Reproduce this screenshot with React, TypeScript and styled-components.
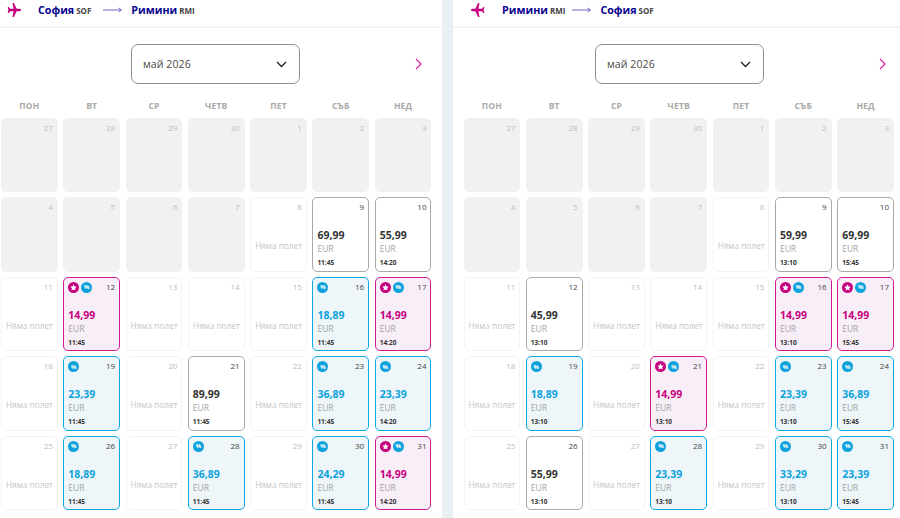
import styled, { createGlobalStyle } from "styled-components";

const GlobalStyle = createGlobalStyle`
  html, body {
    margin: 0;
    padding: 0;
    height: 518px;
    overflow: hidden;
    background: #e8f0f4;
    font-family: "Open Sans", "Noto Sans", sans-serif;
  }
`;

const Page = styled.div`
  display: flex;
  gap: 11px;
  width: 900px;
  height: 518px;
`;

const Panel = styled.section<{ $width: number }>`
  width: ${(p) => p.$width}px;
  height: 518px;
  background: #fff;
  box-sizing: border-box;
  flex: none;
`;

const RouteBar = styled.header<{ $pad: number }>`
  display: flex;
  align-items: center;
  height: 28px;
  box-sizing: border-box;
  padding: 0 0 7px ${(p) => p.$pad}px;
  border-bottom: 2px solid #f5f5f5;
  margin-bottom: 16px;
`;

const PlaneIcon = styled.svg<{ $flip: boolean }>`
  width: 14px;
  height: 14px;
  fill: #c6007e;
  margin-right: 17px;
  transform: ${(p) => (p.$flip ? "scaleX(-1)" : "none")};
`;

const Place = styled.span`
  display: flex;
  align-items: baseline;
  gap: 2px;
`;

const City = styled.span`
  font-size: 10.7px;
  font-weight: 700;
  color: #06038d;
`;

const Code = styled.span`
  font-size: 8px;
  font-weight: 700;
  color: #444;
`;

const ArrowIcon = styled.svg<{ $before: number }>`
  width: 19px;
  height: 6px;
  margin: 0 9px 0 ${(p) => p.$before}px;
  stroke: #6a66c9;
  fill: none;
`;

const MonthRow = styled.div<{ $left: number }>`
  display: flex;
  align-items: center;
  height: 40px;
  padding-left: ${(p) => p.$left}px;
  margin-bottom: 15px;
`;

const MonthSelect = styled.div`
  width: 169px;
  height: 40px;
  box-sizing: border-box;
  display: flex;
  align-items: center;
  justify-content: space-between;
  padding: 0 12px 0 11px;
  border: 1px solid #8f8f8f;
  border-radius: 7px;
  font-size: 10.5px;
  color: #4a4a4a;
  letter-spacing: 0.1px;
`;

const ChevronDown = styled.svg`
  width: 11px;
  height: 7px;
  stroke: #222;
  stroke-width: 1.3;
  fill: none;
`;

const ChevronRight = styled.svg<{ $gap: number }>`
  width: 7px;
  height: 12px;
  stroke: #d6249f;
  stroke-width: 1.2;
  fill: none;
  margin-left: ${(p) => p.$gap}px;
`;

const Grid = styled.div<{ $left: number; $width: number }>`
  display: grid;
  grid-template-columns: repeat(7, minmax(0, 1fr));
  column-gap: 5.5px;
  width: ${(p) => p.$width}px;
  margin-left: ${(p) => p.$left}px;
`;

const WeekDay = styled.div`
  height: 14px;
  margin-bottom: 5px;
  text-align: center;
  font-size: 8.5px;
  font-weight: 700;
  line-height: 14px;
  letter-spacing: 0.2px;
  color: #a9a9a9;
`;

const Days = styled.div`
  grid-column: 1 / -1;
  display: grid;
  grid-template-columns: repeat(7, minmax(0, 1fr));
  grid-auto-rows: 74.4px;
  gap: 5px 5.5px;
`;

type Kind = "off" | "none" | "plain" | "blue" | "pink";

const cellLook: Record<Kind, string> = {
  off: "background:#f1f1f1;border-color:#f1f1f1;",
  none: "background:#fff;border-color:#f3f3f3;",
  plain: "background:#fff;border-color:#a9a9a9;",
  blue: "background:#eef6fa;border-color:#0da9e3;",
  pink: "background:#f8eef7;border-color:#cf1a91;",
};

const Cell = styled.div<{ $kind: Kind }>`
  position: relative;
  box-sizing: border-box;
  min-width: 0;
  border: 1px solid;
  border-radius: 5px;
  padding: 0 4px;
  display: flex;
  flex-direction: column;
  ${(p) => cellLook[p.$kind]}
`;

const DayNumber = styled.span<{ $dim: boolean }>`
  position: absolute;
  top: 3px;
  right: 4px;
  font-size: 8px;
  line-height: 12px;
  color: ${(p) => (p.$dim ? "#bdbdbd" : "#444")};
`;

const NoFlight = styled.div`
  margin-top: 42px;
  text-align: center;
  font-size: 8.3px;
  line-height: 12px;
  color: #c6c6c6;
  white-space: nowrap;
`;

const Badges = styled.div`
  display: flex;
  gap: 2px;
  height: 11px;
  margin-top: 4px;
`;

const Badge = styled.span<{ $pink?: boolean }>`
  display: flex;
  align-items: center;
  justify-content: center;
  width: 11px;
  height: 11px;
  border-radius: 50%;
  background: ${(p) => (p.$pink ? "#c6007e" : "#0da2dc")};
  color: #fff;
  font-size: 6px;
  font-weight: 700;
`;

const StarIcon = styled.svg`
  width: 7px;
  height: 7px;
  fill: #fff;
`;

const priceColor: Record<Kind, string> = {
  off: "#333",
  none: "#333",
  plain: "#333",
  blue: "#0da2dc",
  pink: "#c6007e",
};

const Price = styled.div<{ $kind: Kind }>`
  margin-top: 15px;
  font-size: 10.5px;
  font-weight: 700;
  line-height: 14px;
  color: ${(p) => priceColor[p.$kind]};
`;

const Currency = styled.div`
  margin-top: 1px;
  font-size: 8.5px;
  line-height: 11px;
  color: #a4a4a4;
`;

const Time = styled.div`
  margin-top: 4px;
  font-size: 6.5px;
  font-weight: 700;
  line-height: 9px;
  color: #333;
`;

type Day = { day: number; kind: Kind; price?: string };

const weekDays = ["ПОН", "ВТ", "СР", "ЧЕТВ", "ПЕТ", "СЪБ", "НЕД"];

const leadingDays: Day[] = [
  ...[27, 28, 29, 30, 1, 2, 3, 4, 5, 6, 7].map((day) => ({ day, kind: "off" as Kind })),
  { day: 8, kind: "none" },
];

const none = (day: number): Day => ({ day, kind: "none" });
const fare = (day: number, kind: Kind, price: string): Day => ({ day, kind, price });

const outbound: Day[] = [
  ...leadingDays,
  fare(9, "plain", "69,99"),
  fare(10, "plain", "55,99"),
  none(11),
  fare(12, "pink", "14,99"),
  none(13),
  none(14),
  none(15),
  fare(16, "blue", "18,89"),
  fare(17, "pink", "14,99"),
  none(18),
  fare(19, "blue", "23,39"),
  none(20),
  fare(21, "plain", "89,99"),
  none(22),
  fare(23, "blue", "36,89"),
  fare(24, "blue", "23,39"),
  none(25),
  fare(26, "blue", "18,89"),
  none(27),
  fare(28, "blue", "36,89"),
  none(29),
  fare(30, "blue", "24,29"),
  fare(31, "pink", "14,99"),
];

const inbound: Day[] = [
  ...leadingDays,
  fare(9, "plain", "59,99"),
  fare(10, "plain", "69,99"),
  none(11),
  fare(12, "plain", "45,99"),
  none(13),
  none(14),
  none(15),
  fare(16, "pink", "14,99"),
  fare(17, "pink", "14,99"),
  none(18),
  fare(19, "blue", "18,89"),
  none(20),
  fare(21, "pink", "14,99"),
  none(22),
  fare(23, "blue", "23,39"),
  fare(24, "blue", "36,89"),
  none(25),
  fare(26, "plain", "55,99"),
  none(27),
  fare(28, "blue", "23,39"),
  none(29),
  fare(30, "blue", "33,29"),
  fare(31, "blue", "23,39"),
];

const DayCell = ({ item, index, times }: { item: Day; index: number; times: [string, string] }) => {
  const isSunday = index % 7 === 6;
  return (
    <Cell $kind={item.kind}>
      <DayNumber $dim={item.kind === "off" || item.kind === "none"}>{item.day}</DayNumber>
      {item.kind === "none" && <NoFlight>Няма полет</NoFlight>}
      {item.price && (
        <>
          <Badges>
            {item.kind === "pink" && (
              <Badge $pink>
                <StarIcon viewBox="0 0 10 10">
                  <path d="M5 .5l1.4 3 3.3.4-2.4 2.2.6 3.3L5 7.8 2.100 9.400l.6-3.300L.3 3.900l3.300-.4z" />
                </StarIcon>
              </Badge>
            )}
            {(item.kind === "pink" || item.kind === "blue") && <Badge>%</Badge>}
          </Badges>
          <Price $kind={item.kind}>{item.price}</Price>
          <Currency>EUR</Currency>
          <Time>{isSunday ? times[1] : times[0]}</Time>
        </>
      )}
    </Cell>
  );
};

const Calendar = ({
  from,
  to,
  flip,
  days,
  times,
  width,
  planePad,
  arrowBefore,
  selectLeft,
  gridLeft,
}: {
  from: [string, string];
  to: [string, string];
  flip: boolean;
  days: Day[];
  times: [string, string];
  width: number;
  planePad: number;
  arrowBefore: number;
  selectLeft: number;
  gridLeft: number;
}) => (
  <Panel $width={width}>
    <RouteBar $pad={planePad}>
      <PlaneIcon $flip={flip} viewBox="0 0 16 16">
        <path d="M6.300 0h1.600l3.100 6.500h3c1.100 0 2 .7 2 1.500s-.9 1.500-2 1.500h-3L7.900 16H6.300l1.200-6.500H3.500L2 11.500H.8L1.600 8 .8 4.500H2l1.500 2h4z" />
      </PlaneIcon>
      <Place>
        <City>{from[0]}</City>
        <Code>{from[1]}</Code>
      </Place>
      <ArrowIcon $before={arrowBefore} viewBox="0 0 19 6">
        <path d="M0 3h18M15.500 1l3 2-3 2" />
      </ArrowIcon>
      <Place>
        <City>{to[0]}</City>
        <Code>{to[1]}</Code>
      </Place>
    </RouteBar>
    <MonthRow $left={selectLeft}>
      <MonthSelect>
        май 2026
        <ChevronDown viewBox="0 0 11 7">
          <path d="M1 1l4.500 4.500L10 1" />
        </ChevronDown>
      </MonthSelect>
      <ChevronRight $gap={115} viewBox="0 0 7 12">
        <path d="M1 1l5 5-5 5" />
      </ChevronRight>
    </MonthRow>
    <Grid $left={gridLeft} $width={430.5}>
      {weekDays.map((name) => (
        <WeekDay key={name}>{name}</WeekDay>
      ))}
      <Days>
        {days.map((item, i) => (
          <DayCell key={i} item={item} index={i} times={times} />
        ))}
      </Days>
    </Grid>
  </Panel>
);

export default function App() {
  return (
    <Page>
      <GlobalStyle />
      <Calendar
        from={["София", "SOF"]}
        to={["Римини", "RMI"]}
        flip={false}
        days={outbound}
        times={["11:45", "14:20"]}
        width={442}
        planePad={7}
        arrowBefore={12}
        selectLeft={131}
        gridLeft={1}
      />
      <Calendar
        from={["Римини", "RMI"]}
        to={["София", "SOF"]}
        flip
        days={inbound}
        times={["13:10", "15:45"]}
        width={447}
        planePad={18}
        arrowBefore={7}
        selectLeft={142}
        gridLeft={10.5}
      />
    </Page>
  );
}
